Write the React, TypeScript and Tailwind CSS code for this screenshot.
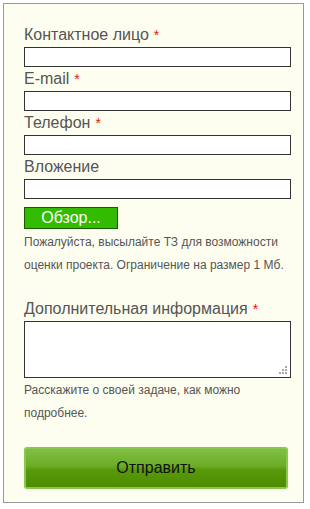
const Label = ({ text, required = false }: { text: string; required?: boolean }) => (
  <div className="h-5 leading-5 text-[16px] text-[#555] mb-[2px]">
    {text}
    {required && <span className="text-[#ee1111] text-[14px] ml-[5px] align-top">*</span>}
  </div>
)

const Field = () => (
  <div className="h-5 w-full border-[1.5px] border-[#333] bg-white" />
)

export default function App() {
  return (
    <div className="min-h-[509px] bg-white p-[3px] font-['Liberation_Sans',Arial,sans-serif]">
      <div className="w-[301px] h-[500px] border border-[#999] bg-[#fefef0] pl-5 pr-3 pt-[21px]">
        <div className="w-[267px]">
          <Label text="Контактное лицо" required />
          <Field />
          <div className="h-[2px]" />
          <Label text="E-mail" required />
          <Field />
          <div className="h-[2px]" />
          <Label text="Телефон" required />
          <Field />
          <div className="h-[2px]" />
          <Label text="Вложение" />
          <Field />

          <button className="mt-2 h-[22px] w-[94px] border border-[#1a5a00] bg-[#33bb00] text-white text-[16px] leading-5">
            Обзор...
          </button>
          <p className="mt-[1px] text-[12px] leading-[23px] text-[#555]">
            Пожалуйста, высылайте ТЗ для возможности оценки проекта. Ограничение на размер 1 Мб.
          </p>

          <div className="mt-[22px]">
            <Label text="Дополнительная информация" required />
          </div>
          <div className="relative h-[57px] w-full border-[1.5px] border-[#333] bg-white">
            <svg className="absolute right-[2px] bottom-[2px]" width="9" height="9" viewBox="0 0 9 9">
              <rect x="6" y="0" width="2" height="2" fill="#aaa" />
              <rect x="3" y="3" width="2" height="2" fill="#aaa" />
              <rect x="6" y="3" width="2" height="2" fill="#aaa" />
              <rect x="0" y="6" width="2" height="2" fill="#aaa" />
              <rect x="3" y="6" width="2" height="2" fill="#aaa" />
              <rect x="6" y="6" width="2" height="2" fill="#aaa" />
            </svg>
          </div>
          <p className="mt-[1px] text-[12px] leading-[23px] text-[#555]">
            Расскажите о своей задаче, как можно подробнее.
          </p>

          <button className="mt-[22px] h-[42px] w-[264px] rounded-[3px] border-2 border-[#86c94f] bg-[linear-gradient(to_bottom,#82bf45_0%,#6aad25_45%,#58990c_55%,#4f8c00_100%)] text-[16px] text-[#111]">
            Отправить
          </button>
        </div>
      </div>
    </div>
  )
}
